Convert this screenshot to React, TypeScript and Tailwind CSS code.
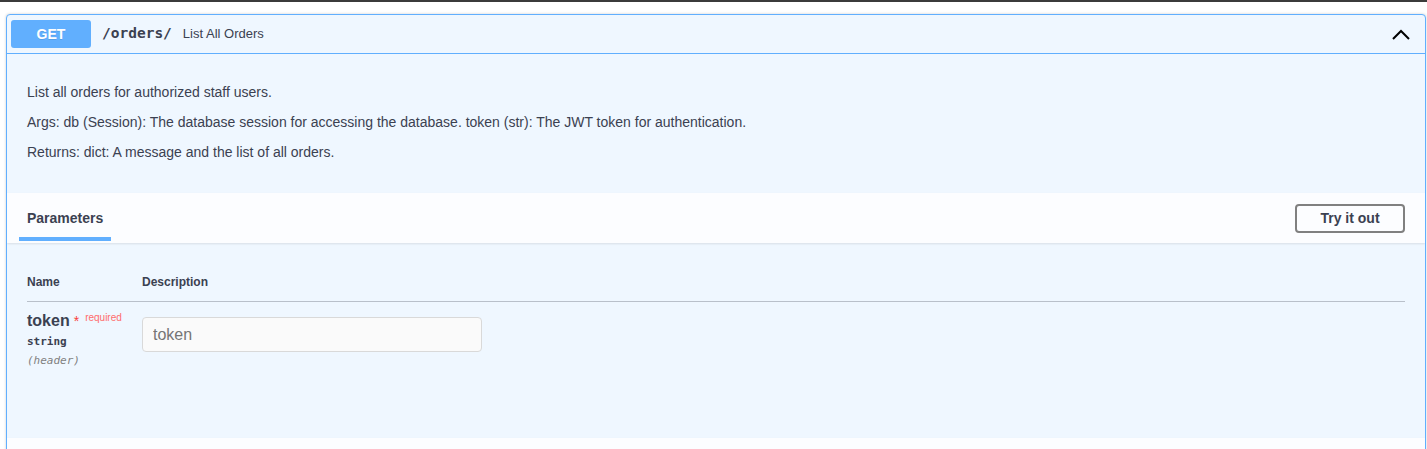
export default function App() {
  return (
    <div className="min-h-screen bg-white font-['Liberation_Sans',Arial,sans-serif] text-[#3b4151]">
      <div className="h-[2px] bg-[#3b3b3b]" />
      <div className="pt-[12px] pl-[6px] pr-[1px]">
        <div className="overflow-hidden rounded-[4px] border border-[#61affe] bg-[#eff7ff] shadow-[0_0_3px_rgba(0,0,0,0.19)]">
          {/* summary row */}
          <div className="flex h-[39px] items-center border-b border-[#61affe] px-[4px]">
            <span className="flex h-[28px] w-[80px] items-center justify-center rounded-[3px] bg-[#61affe] text-[14px] font-bold text-white [text-shadow:0_1px_0_rgba(0,0,0,0.1)]">
              GET
            </span>
            <span className="ml-[11px] font-['DejaVu_Sans_Mono',monospace] text-[14.5px] font-bold text-[#3b4151]">
              /orders/
            </span>
            <span className="ml-[11px] text-[13px] text-[#3b4151]">List All Orders</span>
            <svg className="ml-auto mr-[11px]" width="18" height="11" viewBox="0 0 18 11" fill="none">
              <path d="M1 10 L9 2 L17 10" stroke="#000" strokeWidth="2" />
            </svg>
          </div>

          {/* description */}
          <div className="flex flex-col gap-[10px] px-[20px] pt-[28px] pb-[31px] text-[14px] leading-[20px]">
            <p>List all orders for authorized staff users.</p>
            <p>Args: db (Session): The database session for accessing the database. token (str): The JWT token for authentication.</p>
            <p>Returns: dict: A message and the list of all orders.</p>
          </div>

          {/* tab header */}
          <div className="flex h-[50px] items-center justify-between bg-white/80 px-[20px] shadow-[0_1px_2px_rgba(0,0,0,0.1)]">
            <h4 className="text-[14px] font-bold leading-[16px]">
              <span className="relative">
                Parameters
                <span className="absolute bottom-[-15px] left-[-10%] h-[4px] w-[120%] bg-[#61affe]" />
              </span>
            </h4>
            <button className="h-[29px] w-[110px] rounded-[4px] border-2 border-[#808080] bg-transparent text-[14px] font-bold text-[#3b4151]">
              Try it out
            </button>
          </div>

          {/* parameters table */}
          <div className="h-[195px] px-[20px] pt-[31px]">
            <div className="flex border-b border-[rgba(59,65,81,0.3)] pb-[11px] text-[12px] font-bold leading-[16px]">
              <div className="w-[115px]">Name</div>
              <div>Description</div>
            </div>
            <div className="flex pt-[9px]">
              <div className="w-[115px]">
                <div className="flex items-start leading-[20px]">
                  <span className="text-[16px] font-bold">token</span>
                  <span className="ml-[4px] text-[14px] text-[#f93e3e]">*</span>
                  <span className="ml-[6px] mt-[-3px] text-[10px] text-[#ff6b6b]">required</span>
                </div>
                <div className="mt-[3px] font-['DejaVu_Sans_Mono',monospace] text-[11px] font-semibold leading-[16px]">
                  string
                </div>
                <div className="mt-[3px] font-['DejaVu_Sans_Mono',monospace] text-[11px] italic leading-[16px] text-[#808080]">
                  (header)
                </div>
              </div>
              <div className="pt-[6px]">
                <input
                  placeholder="token"
                  className="h-[35px] w-[340px] rounded-[4px] border border-[#d9d9d9] bg-[#fafafa] px-[10px] text-[16px] text-[#3b4151] outline-none placeholder:text-[#757575]"
                />
              </div>
            </div>
          </div>

          {/* responses header (cut off) */}
          <div className="h-[50px] bg-white/80 shadow-[0_1px_2px_rgba(0,0,0,0.1)]" />
        </div>
      </div>
    </div>
  );
}
